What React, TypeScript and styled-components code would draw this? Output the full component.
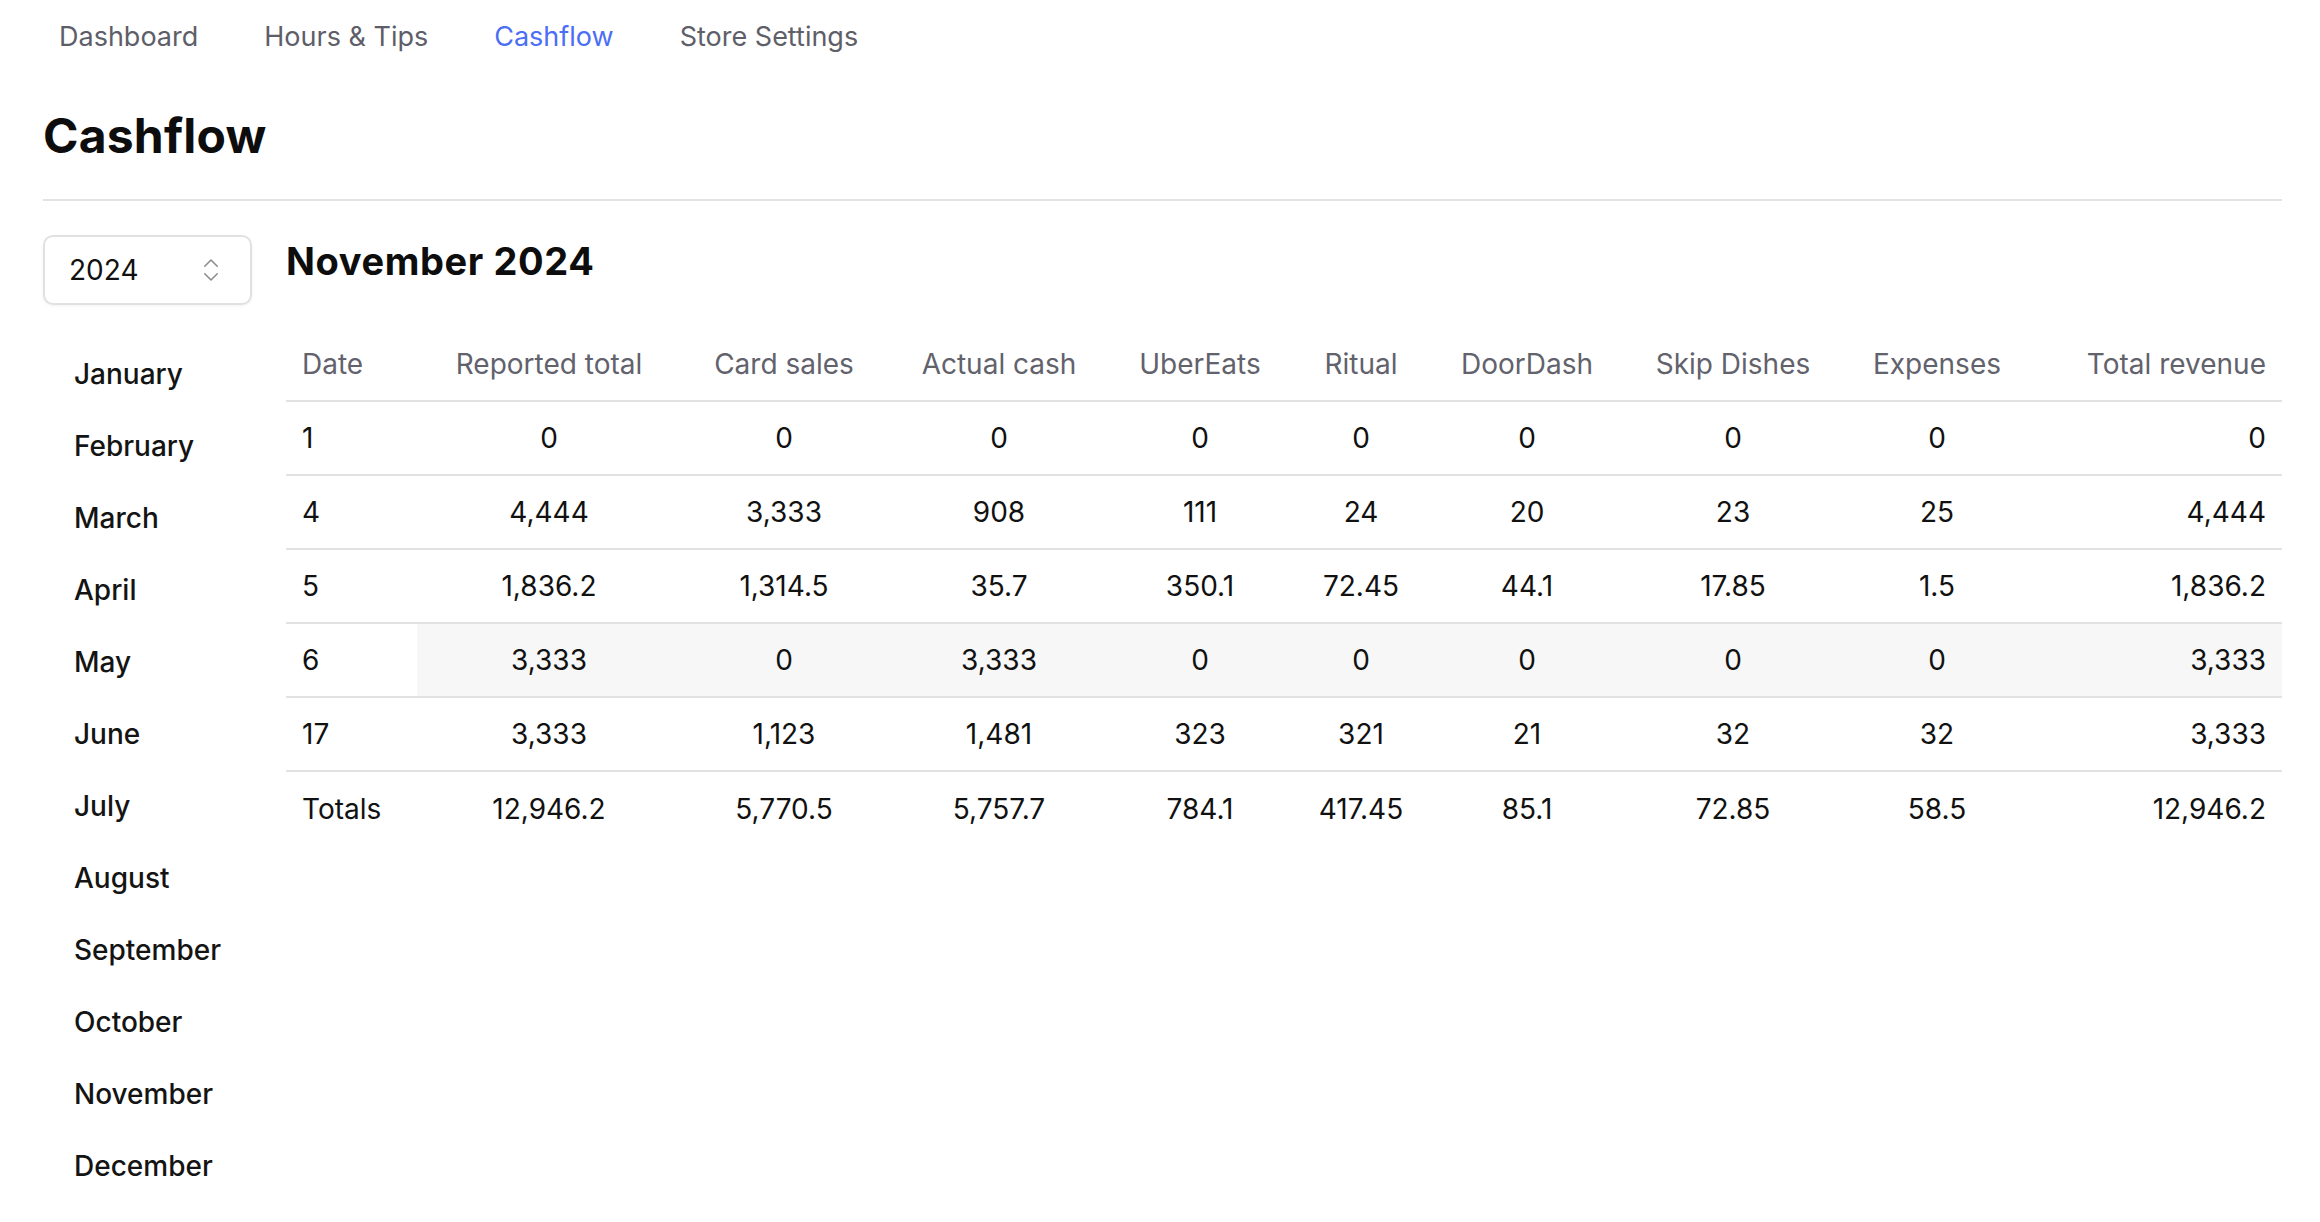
import React from "react";
import styled, { createGlobalStyle } from "styled-components";
import { ChevronsUpDown } from "lucide-react";

const GlobalStyle = createGlobalStyle`
  html, body { margin: 0; padding: 0; background: #ffffff; }
  body {
    font-family: Inter, "Noto Sans", "Liberation Sans", sans-serif;
    color: #111111;
    -webkit-font-smoothing: antialiased;
  }
  * { box-sizing: border-box; }
`;

const Page = styled.div`
  padding: 20px 38px 0 43px;
`;

const Nav = styled.nav`
  display: flex;
  gap: 66px;
  padding-left: 16px;
`;

const NavLink = styled.a<{ $active?: boolean }>`
  font-size: 27px;
  line-height: 34px;
  color: ${(p) => (p.$active ? "#4c6ef5" : "#5e5e69")};
  text-decoration: none;
  cursor: pointer;
`;

const Title = styled.h1`
  margin: 53px 0 0;
  font-size: 48px;
  line-height: 58px;
  font-weight: 700;
  letter-spacing: 0.2px;
  color: #0d0d0d;
`;

const Divider = styled.hr`
  margin: 34px 0 0;
  border: none;
  height: 2px;
  background: #e3e3e3;
`;

const Content = styled.div`
  display: flex;
  gap: 34px;
  margin-top: 34px;
`;

const Sidebar = styled.aside`
  width: 209px;
  flex: none;
  display: flex;
  flex-direction: column;
`;

const YearSelect = styled.div`
  height: 70px;
  border: 2px solid #e1e1e1;
  border-radius: 10px;
  box-shadow: 0 1px 3px rgba(0, 0, 0, 0.06);
  display: flex;
  align-items: center;
  justify-content: space-between;
  padding: 0 24px 0 24px;
  font-size: 28px;
  color: #111;
`;

const MonthList = styled.ul`
  list-style: none;
  margin: 33px 0 0;
  padding: 0;
`;

const MonthItem = styled.li`
  height: 72px;
  display: flex;
  align-items: center;
  padding-left: 31px;
  font-size: 28px;
  font-weight: 500;
  color: #141414;
  cursor: pointer;
`;

const Main = styled.section`
  flex: 1;
  min-width: 0;
`;

const MonthHeading = styled.h2`
  margin: 3px 0 0;
  font-size: 38px;
  line-height: 46px;
  font-weight: 700;
  letter-spacing: 0.6px;
  color: #0d0d0d;
`;

const Table = styled.table`
  margin-top: 43px;
  width: 100%;
  table-layout: fixed;
  border-collapse: collapse;
  font-size: 28px;
`;

const Col = styled.col<{ $w: number }>`
  width: ${(p) => p.$w}px;
`;

type Align = "left" | "center" | "right";

const Th = styled.th<{ $align: Align }>`
  height: 74px;
  padding: 0 16px;
  text-align: ${(p) => p.$align};
  font-weight: 400;
  color: #62626c;
  white-space: nowrap;
`;

const HeadRow = styled.tr`
  border-bottom: 2px solid #e2e2e2;
`;

const BodyRow = styled.tr<{ $last?: boolean }>`
  border-bottom: ${(p) => (p.$last ? "none" : "2px solid #e2e2e2")};
`;

const Td = styled.td<{ $align: Align; $highlight?: boolean }>`
  height: 74px;
  padding: 0 16px;
  text-align: ${(p) => p.$align};
  color: #111;
  white-space: nowrap;
  background: ${(p) => (p.$highlight ? "#f7f7f7" : "transparent")};
`;

const headers = [
  "Date",
  "Reported total",
  "Card sales",
  "Actual cash",
  "UberEats",
  "Ritual",
  "DoorDash",
  "Skip Dishes",
  "Expenses",
  "Total revenue",
];

const widths = [131, 264, 206, 224, 178, 144, 188, 224, 184, 253];

const rows: string[][] = [
  ["1", "0", "0", "0", "0", "0", "0", "0", "0", "0"],
  ["4", "4,444", "3,333", "908", "111", "24", "20", "23", "25", "4,444"],
  ["5", "1,836.2", "1,314.5", "35.7", "350.1", "72.45", "44.1", "17.85", "1.5", "1,836.2"],
  ["6", "3,333", "0", "3,333", "0", "0", "0", "0", "0", "3,333"],
  ["17", "3,333", "1,123", "1,481", "323", "321", "21", "32", "32", "3,333"],
  ["Totals", "12,946.2", "5,770.5", "5,757.7", "784.1", "417.45", "85.1", "72.85", "58.5", "12,946.2"],
];

const months = [
  "January",
  "February",
  "March",
  "April",
  "May",
  "June",
  "July",
  "August",
  "September",
  "October",
  "November",
  "December",
];

const alignFor = (i: number): Align =>
  i === 0 ? "left" : i === headers.length - 1 ? "right" : "center";

export default function App() {
  return (
    <>
      <GlobalStyle />
      <Page>
        <Nav>
          <NavLink>Dashboard</NavLink>
          <NavLink>Hours &amp; Tips</NavLink>
          <NavLink $active>Cashflow</NavLink>
          <NavLink>Store Settings</NavLink>
        </Nav>
        <Title>Cashflow</Title>
        <Divider />
        <Content>
          <Sidebar>
            <YearSelect>
              <span>2024</span>
              <ChevronsUpDown size={30} strokeWidth={1.2} color="#8a8a8a" />
            </YearSelect>
            <MonthList>
              {months.map((m) => (
                <MonthItem key={m}>{m}</MonthItem>
              ))}
            </MonthList>
          </Sidebar>
          <Main>
            <MonthHeading>November 2024</MonthHeading>
            <Table>
              <colgroup>
                {widths.map((w, i) => (
                  <Col key={i} $w={w} />
                ))}
              </colgroup>
              <thead>
                <HeadRow>
                  {headers.map((h, i) => (
                    <Th key={h} $align={alignFor(i)}>
                      {h}
                    </Th>
                  ))}
                </HeadRow>
              </thead>
              <tbody>
                {rows.map((r, ri) => (
                  <BodyRow key={ri} $last={ri === rows.length - 1}>
                    {r.map((c, ci) => (
                      <Td key={ci} $align={alignFor(ci)} $highlight={ri === 3 && ci > 0}>
                        {c}
                      </Td>
                    ))}
                  </BodyRow>
                ))}
              </tbody>
            </Table>
          </Main>
        </Content>
      </Page>
    </>
  );
}
